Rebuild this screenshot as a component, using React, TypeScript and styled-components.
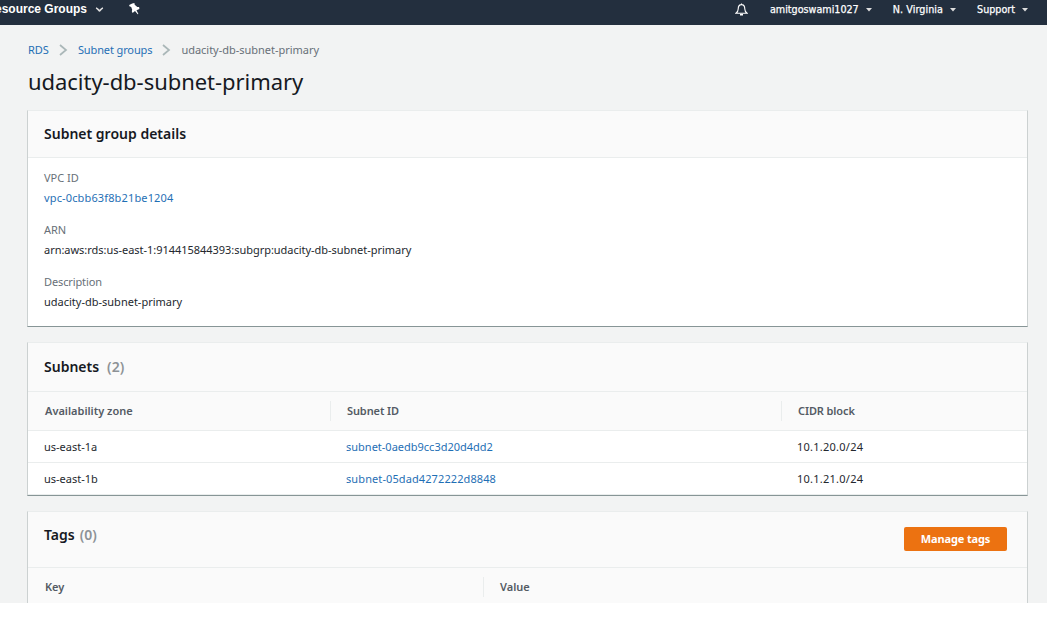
import React from 'react';
import styled, { createGlobalStyle } from 'styled-components';

const GlobalStyle = createGlobalStyle`
  * { box-sizing: border-box; }
  body {
    margin: 0;
    background: #fff;
    overflow: hidden;
    font-family: 'Noto Sans', 'Open Sans', sans-serif;
    font-size: 11px;
    line-height: 20px;
    color: #24282e;
  }
  h1, h2, p { margin: 0; }
`;

const Page = styled.div`
  width: 1047px;
  height: 603px;
  overflow: hidden;
  background: #f2f3f3;
`;

const Text = styled.span<{ $track?: number }>`
  white-space: nowrap;
  letter-spacing: ${(p) => p.$track ?? 0}px;
`;

const TopBar = styled.header`
  display: flex;
  align-items: flex-start;
  justify-content: space-between;
  height: 25px;
  padding-right: 19px;
  overflow: hidden;
  background: #232f3e;
  color: #fff;
`;

const NavGroup = styled.div`
  display: flex;
  align-items: center;
  height: 18px;
`;

const ResourceMenu = styled.div`
  display: flex;
  align-items: center;
  margin-left: -5px;
  font: bold 12px/18px 'Liberation Sans', Arial, sans-serif;
  svg { margin: 2px 0 0 8px; }
`;

const PinIcon = styled.svg`
  margin-left: 25px;
`;

const BellIcon = styled.svg`
  margin: 1px 22px 0 0;
`;

const NavItem = styled.div<{ $gap: number }>`
  display: flex;
  align-items: center;
  height: 20px;
  margin-right: ${(p) => p.$gap}px;
  padding-top: 1px;
  font: 9.6px/19px 'DejaVu Sans', Verdana, sans-serif;
  -webkit-text-stroke: 0.25px #fff;
  svg { margin-left: 7px; }
`;

const Content = styled.main`
  padding: 15px 19px 0 27px;
`;

const Breadcrumbs = styled.nav`
  display: flex;
  align-items: center;
  height: 20px;
  padding-left: 1px;
  color: #687078;
  svg { margin: 0 10px; }
`;

const Link = styled.a`
  color: #1f6fb5;
  text-decoration: none;
`;

const Title = styled.h1`
  height: 50px;
  padding-left: 1px;
  color: #16191f;
  font-size: 22px;
  font-weight: 400;
  line-height: 43px;
`;

const Card = styled.section<{ $height: number }>`
  height: ${(p) => p.$height}px;
  margin-bottom: 15px;
  background: #fff;
  border: 1px solid #ccd1d1;
  border-top-color: #eaeded;
  border-bottom-color: #879596;
`;

const CardHeader = styled.div<{ $height: number; $top?: number }>`
  display: flex;
  justify-content: space-between;
  align-items: flex-start;
  height: ${(p) => p.$height}px;
  padding: ${(p) => p.$top ?? 13}px 20px 0 16px;
  background: #fafafa;
  border-bottom: 1px solid #eaeded;
`;

const CardTitle = styled.h2`
  display: flex;
  color: #16191f;
  font-size: 14px;
  font-weight: 600;
  line-height: 20px;
`;

const Count = styled.span<{ $gap: number }>`
  margin-left: ${(p) => p.$gap}px;
  color: #8d9296;
`;

const Details = styled.dl`
  display: flex;
  flex-direction: column;
  gap: 12px;
  margin: 0;
  padding: 10px 16px;
`;

const Term = styled.dt`
  height: 20px;
  color: #687078;
`;

const Value = styled.dd`
  height: 20px;
  margin: 0;
`;

const HeadRow = styled.div<{ $cols: string }>`
  display: grid;
  grid-template-columns: ${(p) => p.$cols};
  align-items: center;
  height: 39px;
  background: #fafafa;
  border-bottom: 1px solid #eaeded;
`;

const HeadCell = styled.div`
  height: 20px;
  padding-left: 17px;
  color: #545b64;
  font-size: 11px;
  font-weight: 600;
  & + & {
    padding-left: 16px;
    border-left: 1px solid #eaeded;
  }
`;

const Row = styled.div<{ $cols: string }>`
  display: grid;
  grid-template-columns: ${(p) => p.$cols};
  align-items: center;
  height: 32px;
  border-bottom: 1px solid #eaeded;
  > span { padding-left: 16px; }
`;

const Button = styled.button`
  width: 103px;
  height: 24px;
  margin-top: 2px;
  padding: 0;
  border: 0;
  border-radius: 2px;
  background: #ec7211;
  color: #fff;
  font: 700 11px/24px 'Noto Sans', sans-serif;
`;

const Chevron = () => (
  <svg width="9" height="14" viewBox="0 0 9 14" fill="none" stroke="#aab7b8" strokeWidth="1.7">
    <path d="M1 2l6 5-6 5" />
  </svg>
);

const Caret = () => (
  <svg width="6" height="4" viewBox="0 0 6 4" fill="#ddd">
    <path d="M0 0h6L3 3.6z" />
  </svg>
);

const subnetCols = '302px 451px 1fr';
const tagCols = '455px 1fr';

const subnets = [
  { zone: 'us-east-1a', id: 'subnet-0aedb9cc3d20d4dd2', track: 0, cidr: '10.1.20.0/24' },
  { zone: 'us-east-1b', id: 'subnet-05dad4272222d8848', track: 0.1, cidr: '10.1.21.0/24' },
];

export default function App() {
  return (
    <>
      <GlobalStyle />
      <Page>
        <TopBar>
          <NavGroup>
            <ResourceMenu>
              <Text>esource Groups</Text>
              <svg width="9" height="6" viewBox="0 0 9 6" fill="none" stroke="#ddd" strokeWidth="1.7">
                <path d="M1 1c2 .4 2.500 2.600 3.500 2.800C5.500 3.600 6 1.400 8 1" />
              </svg>
            </ResourceMenu>
            <PinIcon width="11" height="12" viewBox="0 0 11 12" fill="#fff">
              <path d="M3.200.4L5.400 0l.3 1.800 2.600 2.100 1.800.2.300 2-2.900 1.100 1.900 3.900-.7.100-2.700-3.200-2.400 1.900-.8-1.600.4-1.600L2.200 3.900.4 3.300.2 2z" />
            </PinIcon>
          </NavGroup>
          <NavGroup>
            <BellIcon width="13" height="13" viewBox="0 0 13 13" fill="none" stroke="#fff" strokeWidth="1.1">
              <path d="M6.500.4v1M3.200 6c0-3 1.200-4.400 3.300-4.400S9.800 3 9.800 6c0 2.200.8 3.200 2.300 4.300H.9C2.400 9.200 3.200 8.200 3.200 6z" />
              <path d="M5 11.700h3" strokeWidth="1.600" />
            </BellIcon>
            <NavItem $gap={21}><Text>amitgoswami1027</Text><Caret /></NavItem>
            <NavItem $gap={21}><Text $track={0.08}>N. Virginia</Text><Caret /></NavItem>
            <NavItem $gap={0}><Text>Support</Text><Caret /></NavItem>
          </NavGroup>
        </TopBar>
        <Content>
          <Breadcrumbs>
            <Link><Text>RDS</Text></Link>
            <Chevron />
            <Link><Text $track={-0.12}>Subnet groups</Text></Link>
            <Chevron />
            <Text $track={-0.02}>udacity-db-subnet-primary</Text>
          </Breadcrumbs>
          <Title><Text $track={-0.04}>udacity-db-subnet-primary</Text></Title>
          <Card $height={217}>
            <CardHeader $height={47}>
              <CardTitle><Text>Subnet group details</Text></CardTitle>
            </CardHeader>
            <Details>
              <div>
                <Term><Text>VPC ID</Text></Term>
                <Value><Link><Text $track={0.14}>vpc-0cbb63f8b21be1204</Text></Link></Value>
              </div>
              <div>
                <Term><Text>ARN</Text></Term>
                <Value><Text $track={-0.03}>arn:aws:rds:us-east-1:914415844393:subgrp:udacity-db-subnet-primary</Text></Value>
              </div>
              <div>
                <Term><Text $track={-0.12}>Description</Text></Term>
                <Value><Text>udacity-db-subnet-primary</Text></Value>
              </div>
            </Details>
          </Card>
          <Card $height={154}>
            <CardHeader $height={49} $top={14}>
              <CardTitle><Text>Subnets</Text><Count $gap={8}>(2)</Count></CardTitle>
            </CardHeader>
            <HeadRow $cols={subnetCols}>
              <HeadCell><Text>Availability zone</Text></HeadCell>
              <HeadCell><Text $track={-0.1}>Subnet ID</Text></HeadCell>
              <HeadCell><Text $track={-0.1}>CIDR block</Text></HeadCell>
            </HeadRow>
            {subnets.map((s) => (
              <Row key={s.id} $cols={subnetCols}>
                <Text>{s.zone}</Text>
                <Text $track={s.track}><Link>{s.id}</Link></Text>
                <Text $track={0.25}>{s.cidr}</Text>
              </Row>
            ))}
          </Card>
          <Card $height={160}>
            <CardHeader $height={56}>
              <CardTitle><Text>Tags</Text><Count $gap={5}>(0)</Count></CardTitle>
              <Button><Text $track={-0.15}>Manage tags</Text></Button>
            </CardHeader>
            <HeadRow $cols={tagCols}>
              <HeadCell><Text>Key</Text></HeadCell>
              <HeadCell><Text>Value</Text></HeadCell>
            </HeadRow>
          </Card>
        </Content>
      </Page>
    </>
  );
}
